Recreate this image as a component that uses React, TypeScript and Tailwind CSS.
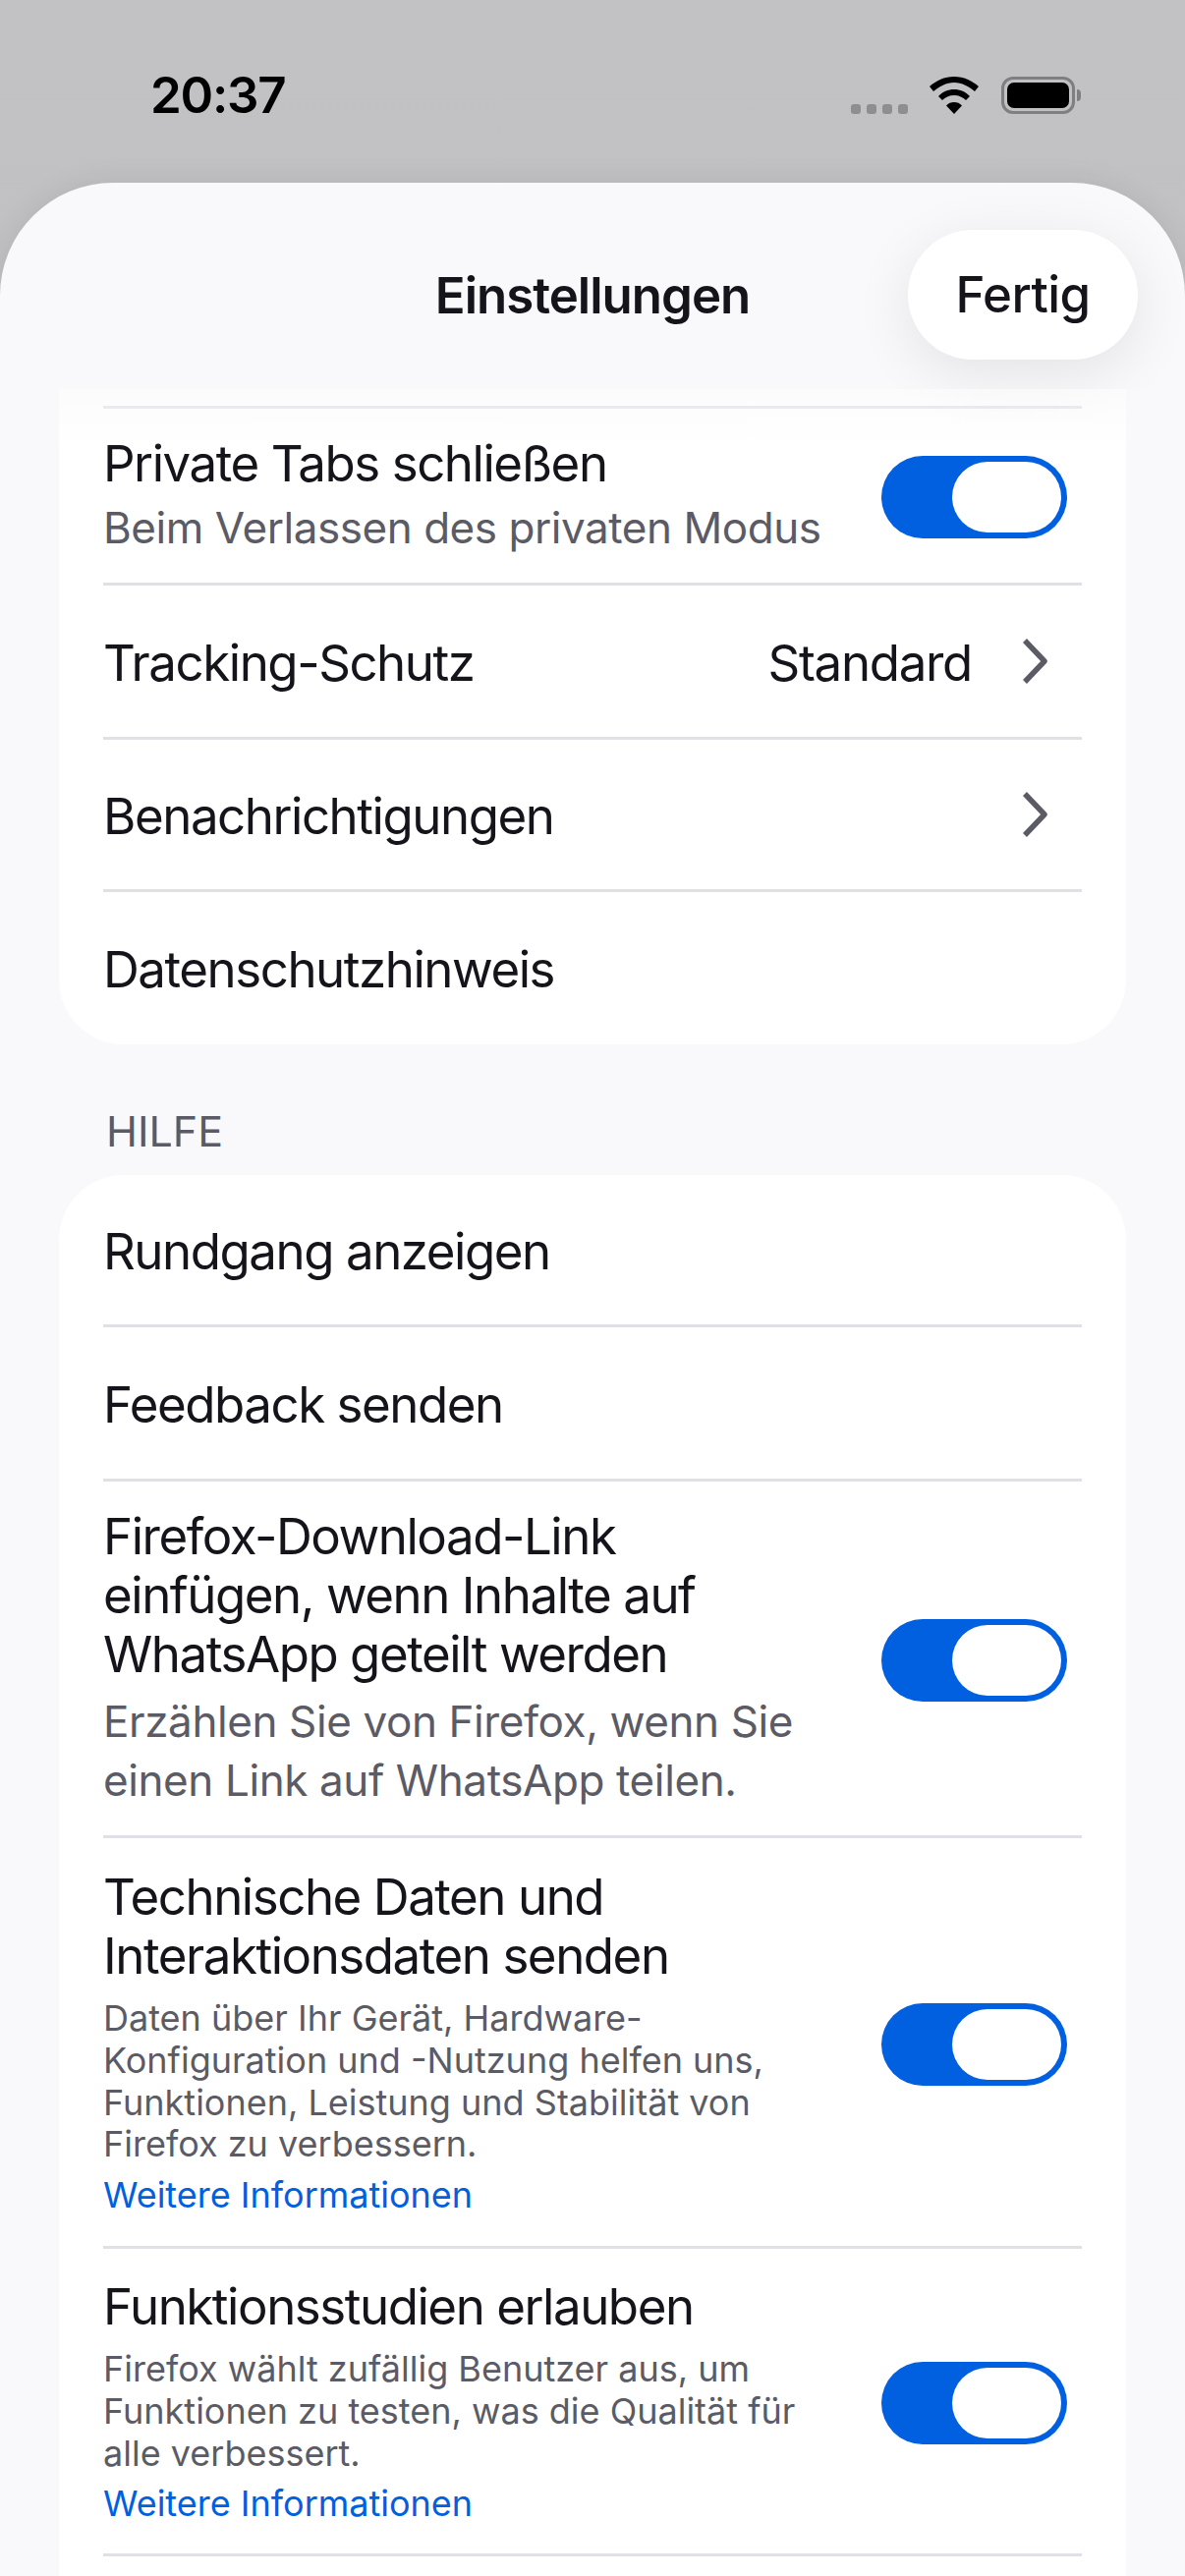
import type { ReactNode } from "react";

const font = "font-['Inter','Noto_Sans',sans-serif]";

function Toggle() {
  return (
    <div className="flex h-[84px] w-[189px] shrink-0 justify-end rounded-full bg-[#0060df] p-[6px]">
      <div className="h-[72px] w-[111px] rounded-full bg-white" />
    </div>
  );
}

function ToggleSlot() {
  return (
    <div className="pt-[4px] pr-[15px]">
      <Toggle />
    </div>
  );
}

function Chevron() {
  return (
    <svg width="26" height="46" viewBox="0 0 26 46" fill="none" className="shrink-0">
      <path d="M3 2 L23 23 L3 44" stroke="#5b5b66" strokeWidth="5.500" strokeLinejoin="round" />
    </svg>
  );
}

function Row({ height, first, children }: { height: string; first?: boolean; children: ReactNode }) {
  return (
    <div className={`flex items-center justify-between ${height} ${first ? "" : "border-t-[3px] border-[#e0e0e6]"}`}>
      {children}
    </div>
  );
}

function Title({ children }: { children: ReactNode }) {
  return <p className="text-[51px] leading-[60px] tracking-[-1.45px]">{children}</p>;
}

function SingleTitle({ children }: { children: ReactNode }) {
  return <p className="pt-[3px] text-[51px] leading-[60px] tracking-[-1.45px]">{children}</p>;
}

function StatusBar() {
  return (
    <div className="flex h-[186px] items-start justify-between pl-[153px] pr-[106px] pt-[70px]">
      <span className="text-[51px] leading-[54px] font-semibold tracking-[-1.2px] text-black">20:37</span>
      <div className="flex items-center pt-[8px]">
        <div className="mt-[28px] mr-[22px] flex gap-[6px]">
          {[0, 1, 2, 3].map((i) => (
            <div key={i} className="h-[10px] w-[10px] rounded-[3px] bg-[#8e8e90]" />
          ))}
        </div>
        <svg width="50" height="38" viewBox="0 0 50 38" className="mr-[23px]">
          <path d="M25 0 C15 0 7 4 0 10 L4 15 C10 10 17 6 25 6 C33 6 40 10 46 15 L50 10 C43 4 35 0 25 0 Z" fill="#000" />
          <path d="M25 13 C19 13 13 15.500 9 20 L13 24 C16 21 20 19 25 19 C30 19 34 21 37 24 L41 20 C37 15.500 31 13 25 13 Z" fill="#000" />
          <path d="M25 26 C22 26 19 27 17 29.500 L25 38 L33 29.500 C31 27 28 26 25 26 Z" fill="#000" />
        </svg>
        <div className="flex items-center">
          <div className="flex h-[38px] w-[75px] rounded-[12px] border-[3px] border-[#7f7f81] p-[3px]">
            <div className="flex-1 rounded-[7px] bg-black" />
          </div>
          <div className="ml-[2px] h-[12px] w-[4px] rounded-r-full bg-[#7f7f81]" />
        </div>
      </div>
    </div>
  );
}

export default function App() {
  return (
    <div className={`h-[2622px] w-[1206px] overflow-hidden bg-gradient-to-b from-[#c2c2c4] to-[#b9b9bb] ${font}`}>
      <StatusBar />

      <div className="relative h-[2436px] rounded-t-[115px] bg-[#f9f9fb] shadow-[0_0_30px_rgba(0,0,0,0.08)]">
        {/* header */}
        <div className="relative flex h-[210px] items-center justify-center pt-[20px]">
          <h1 className="text-[51px] leading-[60px] font-semibold tracking-[-1px] text-[#15141a]">Einstellungen</h1>
          <button className="absolute right-[48px] top-[48px] flex h-[132px] w-[234px] items-center justify-center rounded-[66px] bg-white text-[51px] font-medium tracking-[-0.6px] text-[#15141a] shadow-[0_14px_60px_rgba(0,0,0,0.09)]">
            Fertig
          </button>
        </div>

        {/* fade under header */}
        <div className="pointer-events-none absolute inset-x-0 top-[210px] z-10 h-[60px] bg-gradient-to-b from-[#f9f9fb]/60 to-transparent" />

        <div className="mx-[60px]">
          <section className="rounded-b-[66px] bg-white px-[45px] pt-[17px] text-[#15141a]">
            <Row height="h-[180px]">
              <div>
                <Title>Private Tabs schließen</Title>
                <p className="mt-[5px] text-[44px] leading-[60px] tracking-[-0.45px] text-[#5b5b66]">Beim Verlassen des privaten Modus</p>
              </div>
              <div className="pt-[3px] pr-[15px]">
                <Toggle />
              </div>
            </Row>
            <Row height="h-[157px]">
              <SingleTitle>Tracking-Schutz</SingleTitle>
              <div className="flex items-center gap-[51px] pr-[35px]">
                <span className="pt-[3px] text-[51px] leading-[60px] tracking-[-1.3px]">Standard</span>
                <Chevron />
              </div>
            </Row>
            <Row height="h-[155px]">
              <SingleTitle>Benachrichtigungen</SingleTitle>
              <div className="pr-[35px]"><Chevron /></div>
            </Row>
            <Row height="h-[158px]">
              <SingleTitle>Datenschutzhinweis</SingleTitle>
            </Row>
          </section>

          <h2 className="mt-[63px] pl-[48px] text-[43px] leading-[50px] text-[#5b5b66]">HILFE</h2>

          <section className="mt-[20px] rounded-t-[66px] bg-white px-[45px] text-[#15141a]">
            <Row height="h-[152px]" first>
              <SingleTitle>Rundgang anzeigen</SingleTitle>
            </Row>
            <Row height="h-[157px]">
              <SingleTitle>Feedback senden</SingleTitle>
            </Row>
            <Row height="h-[363px]">
              <div className="w-[770px]">
                <div className="w-[730px]">
                  <Title>Firefox-Download-Link einfügen, wenn Inhalte auf WhatsApp geteilt werden</Title>
                </div>
                <p className="mt-[8px] text-[44px] leading-[60px] tracking-[-0.4px] text-[#5b5b66]">Erzählen Sie von Firefox, wenn Sie einen Link auf WhatsApp teilen.</p>
              </div>
              <ToggleSlot />
            </Row>
            <Row height="h-[418px]">
              <div className="w-[770px]">
                <Title>Technische Daten und Interaktionsdaten senden</Title>
                <p className="mt-[12px] text-[36px] leading-[42.700px] text-[#5b5b66]">Daten über Ihr Gerät, Hardware-Konfiguration und -Nutzung helfen uns, Funktionen, Leistung und Stabilität von Firefox zu verbessern.</p>
                <p className="mt-[9px] text-[36px] leading-[42.700px] text-[#0060df]">Weitere Informationen</p>
              </div>
              <ToggleSlot />
            </Row>
            <Row height="h-[313px]">
              <div className="w-[770px]">
                <Title>Funktionsstudien erlauben</Title>
                <p className="mt-[12px] text-[36px] leading-[42.700px] text-[#5b5b66]">Firefox wählt zufällig Benutzer aus, um Funktionen zu testen, was die Qualität für alle verbessert.</p>
                <p className="mt-[9px] text-[36px] leading-[42.700px] text-[#0060df]">Weitere Informationen</p>
              </div>
              <ToggleSlot />
            </Row>
            <Row height="h-[100px]"><span /></Row>
          </section>
        </div>
      </div>
    </div>
  );
}
